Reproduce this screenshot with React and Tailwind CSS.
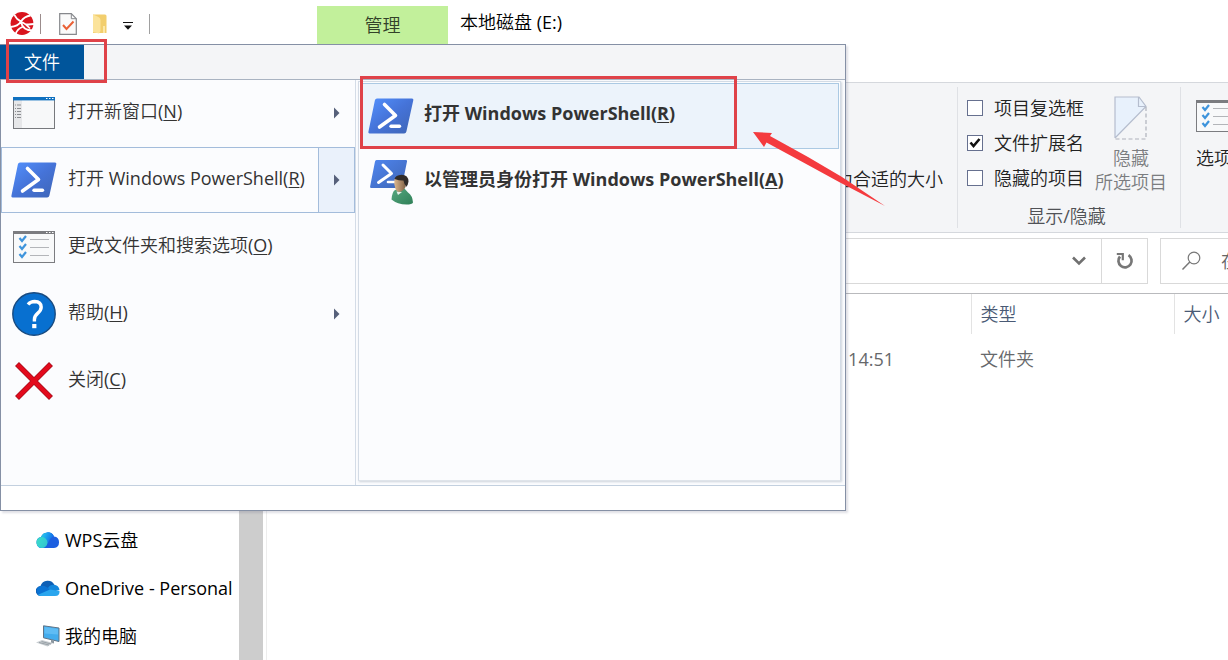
import React from "react";

function Key({ children }) {
  return <span className="underline decoration-1 underline-offset-2">{children}</span>;
}

function PowerShellIcon({ id, className }) {
  return (
    <svg viewBox="0 0 46 36" className={className} aria-hidden="true">
      <defs>
        <linearGradient id={id} x1="0" y1="0" x2="1" y2="1">
          <stop offset="0" stopColor="#5391fe" />
          <stop offset="0.5" stopColor="#4573d8" />
          <stop offset="1" stopColor="#3e65b5" />
        </linearGradient>
      </defs>
      <path d="M9 0.5H44q1.800 0 1.300 1.800L38.400 33.600q-.5 1.900-2.300 1.900H1.600Q0 35.500.4 33.700L6.900 2.300Q7.300.5 9 .5Z" fill={`url(#${id})`} />
      <path d="M16.500 6.500 27.500 17.500 11.500 29" fill="none" stroke="#fff" strokeWidth="3.600" strokeLinecap="round" strokeLinejoin="round" />
      <path d="M23 28.200H31.500" stroke="#fff" strokeWidth="3.400" strokeLinecap="round" />
    </svg>
  );
}

function AdminShellIcon() {
  return (
    <svg viewBox="0 0 46 46" className="h-[46px] w-[46px] shrink-0" aria-hidden="true">
      <defs>
        <linearGradient id="ps-admin" x1="0" y1="0" x2="1" y2="1">
          <stop offset="0" stopColor="#4f86f0" />
          <stop offset="1" stopColor="#3e65b5" />
        </linearGradient>
        <linearGradient id="admin-face" x1="0" y1="0" x2="1" y2="0">
          <stop offset="0" stopColor="#dcb78e" />
          <stop offset="1" stopColor="#7b5c42" />
        </linearGradient>
        <linearGradient id="admin-coat" x1="0" y1="0" x2="1" y2="1">
          <stop offset="0" stopColor="#57a880" />
          <stop offset="1" stopColor="#2f8058" />
        </linearGradient>
      </defs>
      <path d="M8.500 1H38q1.500 0 1 1.500L34 27q-.4 2-2 2H3.300q-1.500 0-1.200-1.500L7 2.500Q7.300 1 8.500 1Z" fill="url(#ps-admin)" />
      <path d="M15 6 23.500 14.500 10.500 23.500" fill="none" stroke="#fff" strokeWidth="3" strokeLinecap="round" strokeLinejoin="round" />
      <path d="M20 23h7" stroke="#fff" strokeWidth="2.600" strokeLinecap="round" />
      <path d="M27 31q-3 2-3.500 9.500 6 5 15 5 5.500 0 6.500-2-.5-7-5-10L36 29Z" fill="url(#admin-coat)" />
      <path d="m28.500 32.500 1.500 3.500 4-3Z" fill="#e4eee7" />
      <path d="M26.500 20q-1 5.500 1 10 1.500 3.500 4 3 4-1 6-5L38.500 19Z" fill="url(#admin-face)" />
      <path d="M26.500 20q1-4 7-4.300 7 .3 7 6.800-.3 3.500-2.500 5.500-.3-2-1.500-3l-1-3.500q-4 .2-9-1.500Z" fill="#302b29" />
    </svg>
  );
}

function WindowIcon() {
  return (
    <svg viewBox="0 0 42 32" className="h-8 w-[42px]" aria-hidden="true">
      <rect x="0.5" y="0.5" width="41" height="31" fill="#f7f8f9" stroke="#77797d" />
      <rect x="1" y="3" width="8" height="28" fill="#e6e7e9" />
      <rect width="42" height="3.400" fill="#0f70c0" />
      <path d="M33 1.500h8" stroke="#fff" strokeWidth="1.200" strokeDasharray="1.500 1.500" />
      <path d="M2 8h6M2 11.500h6M2 14.500h6M2 17.500h6M2 20.500h6" stroke="#8b8d91" strokeWidth="1" strokeDasharray="1 1 4 0" />
    </svg>
  );
}

function OptionsIcon() {
  return (
    <svg viewBox="0 0 42 32" className="h-8 w-[42px] shrink-0" aria-hidden="true">
      <rect x="0.5" y="0.5" width="41" height="31" fill="#f8f9fa" stroke="#7b7c80" />
      <rect width="42" height="3" fill="#7b7c80" />
      <path d="M33 1.500h8" stroke="#fff" strokeWidth="1" strokeDasharray="1.500 1.500" />
      <path d="M17 8.500h19M17 16.500h19M17 24.500h19" stroke="#b3b5b9" strokeWidth="1" />
      <path d="m6.500 7 2.500 3 4-5M6.500 15l2.500 3 4-5M6.500 23l2.500 3 4-5" fill="none" stroke="#3e94dc" strokeWidth="2.200" />
    </svg>
  );
}

function HelpIcon() {
  return (
    <svg viewBox="0 0 44 44" className="h-11 w-11" aria-hidden="true">
      <circle cx="22" cy="22" r="21.200" fill="#0870d0" stroke="#174a80" strokeWidth="1.400" />
      <path d="M16 12.500q2.500-3 6.700-3 6.300.2 6.500 5.600 0 3.300-3.600 6.300-3.200 2.700-3.200 6v2" fill="none" stroke="#fff" strokeWidth="3.400" />
      <rect x="20.200" y="32" width="4.200" height="4.200" fill="#fff" />
    </svg>
  );
}

function CloseIcon() {
  return (
    <svg viewBox="0 0 38 38" className="h-[38px] w-[38px]" aria-hidden="true">
      <path d="M2 2 36 36M36 2 2 36" stroke="#a30d1a" strokeWidth="5.600" />
      <path d="M2.500 2.500 35.500 35.500M35.500 2.500 2.500 35.500" stroke="#e30a1c" strokeWidth="4.200" />
    </svg>
  );
}

function Arrow() {
  return (
    <svg viewBox="0 0 6 12" className="h-3 w-1.5" aria-hidden="true">
      <path d="M0 .5 5.500 6 0 11.500Z" fill="#56607a" />
    </svg>
  );
}

function TitleBar() {
  return (
    <header className="flex h-11 shrink-0 items-end">
      <div className="flex h-11 w-[317px] shrink-0 items-center gap-2 pl-2.5 pt-1">
        <svg viewBox="0 0 24 24" className="h-6 w-6" aria-hidden="true">
          <circle cx="12" cy="11.500" r="11.400" fill="#d9141d" />
          <path d="M4.500 3Q6.500 7.500 11 9.500T20 16.500M20.500 3.500Q14 4.500 11 9.500T.5 15M11 10Q12.500 18.500 23 18.500M14.500 12Q18 13 24 12M5.500 22.500Q7 17 12.500 15" fill="none" stroke="#fff" strokeWidth="1.800" />
        </svg>
        <span className="-ml-0.5 h-5 w-px bg-[#9b8c8c]" />
        <button aria-label="属性" className="ml-2.5 block">
          <svg viewBox="0 0 18 22" className="h-[22px] w-[18px]" aria-hidden="true">
            <path d="M.7.7h11.600l5 5v15.600H.7Z" fill="#fafafa" stroke="#86888c" strokeWidth="1.200" />
            <path d="M12.300.7v5h5" fill="none" stroke="#86888c" />
            <path d="m4 12 3.500 4 7-7.500" fill="none" stroke="#ea6035" strokeWidth="2" />
          </svg>
        </button>
        <button aria-label="新建文件夹" className="ml-2 block">
          <svg viewBox="0 0 14 20" className="h-5 w-3.5" aria-hidden="true">
            <path d="M0 .5h12q1.500 0 1.500 1.500v17H0Z" fill="#f2ce6d" />
            <path d="M0 .5 5.500 3q2 1 2 3v11L6 19.500 0 18Z" fill="#fbe39b" />
            <path d="M11 12v7" stroke="#fff0bb" strokeWidth="1.500" />
          </svg>
        </button>
        <button aria-label="自定义快速访问工具栏" className="ml-2 block pt-1">
          <svg viewBox="0 0 10 8" className="h-2 w-2.5" aria-hidden="true">
            <path d="M0 .5h10" stroke="#111" />
            <path d="M1 3.500h8L5 7.800Z" fill="#111" />
          </svg>
        </button>
        <span className="ml-2 h-5 w-px bg-[#a0a0a0]" />
      </div>
      <button className="h-[38px] w-[131px] shrink-0 bg-[#c2f09b] text-[#334229]">管理</button>
      <h1 className="ml-3 h-11 whitespace-nowrap leading-[44px] text-black">本地磁盘 (E:)</h1>
    </header>
  );
}

function CheckRow({ label, checked }) {
  return (
    <label className="flex h-[35px] items-center gap-[11px] whitespace-nowrap">
      <span className="grid">
        <input
          type="checkbox"
          defaultChecked={checked}
          className="peer col-start-1 row-start-1 h-4 w-4 appearance-none border border-[#66708f] bg-white"
        />
        <svg viewBox="0 0 16 16" className="pointer-events-none col-start-1 row-start-1 hidden h-4 w-4 peer-checked:block" aria-hidden="true">
          <path d="m3.500 7.500 3 3.500 6-7" fill="none" stroke="#111" strokeWidth="2.600" />
        </svg>
      </span>
      {label}
    </label>
  );
}

function Ribbon() {
  return (
    <section className="mt-[38px] flex h-[151px] shrink-0 border-y border-[#d5d8dd] bg-[#f4f5f7] text-[#222]">
      <div className="my-1 flex min-w-0 flex-1 items-end justify-end border-r border-[#dfe1e5] pb-[37px] pr-3.5">
        <span className="whitespace-nowrap leading-6">将所有列调整为合适的大小</span>
      </div>
      <div className="my-1 flex w-[223px] shrink-0 flex-col justify-between border-r border-[#dfe1e5] pl-[9px]">
        <div className="flex gap-[11px] pt-[3px]">
          <div>
            <CheckRow label="项目复选框" />
            <CheckRow label="文件扩展名" checked />
            <CheckRow label="隐藏的项目" />
          </div>
          <button disabled className="flex flex-col items-center whitespace-nowrap pt-1.5 leading-6 text-[#7b7d80]">
            <svg viewBox="0 0 34 44" className="mb-1.5 h-11 w-[34px]" aria-hidden="true">
              <path d="M1 1h24l7 9.500L1 42Z" fill="#e8f1fc" />
              <path d="M1 42V1h24l7 9.500L1 42M24.500 1v9.500H32" fill="none" stroke="#b5bdce" strokeWidth="1.200" />
              <path d="M32 11v32H1" fill="none" stroke="#aeb2bb" strokeWidth="1.200" strokeDasharray="4 2.500" />
            </svg>
            <span>隐藏</span>
            <span>所选项目</span>
          </button>
        </div>
        <span className="pr-3.5 text-center leading-6 text-[#505256]">显示/隐藏</span>
      </div>
      <div className="w-[47px] shrink-0 overflow-hidden pl-[15px] pt-[17px]">
        <button className="flex flex-col items-start gap-3.5 whitespace-nowrap">
          <OptionsIcon />
          <span>选项</span>
        </button>
      </div>
    </section>
  );
}

function AddressBar() {
  return (
    <div className="flex h-[60px] shrink-0 gap-3 pt-[5px]">
      <div className="flex h-[46px] min-w-0 flex-1 border border-[#d9d9d9]">
        <div className="flex flex-1 items-center justify-end pr-[15px]">
          <button aria-label="展开地址">
            <svg viewBox="0 0 14 10" className="h-2.5 w-3.5" aria-hidden="true">
              <path d="m1 1.500 6 6 6-6" fill="none" stroke="#707070" strokeWidth="2.600" />
            </svg>
          </button>
        </div>
        <button aria-label="刷新" className="flex w-[46px] items-center justify-center border-l border-[#d9d9d9]">
          <svg viewBox="0 0 18 18" className="h-[18px] w-[18px]" aria-hidden="true">
            <path d="M12.500 3.200A6.600 6.600 0 1 1 4 4.500" fill="none" stroke="#777" strokeWidth="2.700" />
            <path d="M.8 2H6.800V8.200" fill="none" stroke="#777" strokeWidth="2.200" />
          </svg>
        </button>
      </div>
      <label className="flex h-[46px] w-[68px] shrink-0 items-center gap-5 overflow-hidden border border-r-0 border-[#d9d9d9] pl-5">
        <svg viewBox="0 0 20 20" className="h-5 w-5 shrink-0" aria-hidden="true">
          <circle cx="13" cy="7" r="5.800" fill="none" stroke="#777" strokeWidth="1.200" />
          <path d="M8.800 11 1.500 18.500" stroke="#777" strokeWidth="1.500" />
        </svg>
        <input type="search" aria-label="搜索" placeholder="在" className="w-16 shrink-0 bg-transparent outline-none placeholder:text-[#666]" />
      </label>
    </div>
  );
}

function CloudIcon({ kind }) {
  if (kind === "wps") {
    return (
      <svg viewBox="0 0 24 18" className="h-[18px] w-6" aria-hidden="true">
        <defs>
          <linearGradient id="wps-cloud" x1="0" y1="0" x2="1" y2="0.4">
            <stop offset="0" stopColor="#3be2bb" />
            <stop offset="0.45" stopColor="#20b5ee" />
            <stop offset="1" stopColor="#1160e8" />
          </linearGradient>
        </defs>
        <path d="M6 17a5.500 5.500 0 0 1-1-10.900A7 7 0 0 1 18 5.500 5.800 5.800 0 0 1 18 17Z" fill="#1c5fe0" />
        <path d="M6 17a5.500 5.500 0 0 1-1-10.900A7 7 0 0 1 18 5.500Q14.500 6 13 10T8 17Z" fill="url(#wps-cloud)" />
        <circle cx="6" cy="11.500" r="5.400" fill="#3fdcc4" opacity="0.75" />
      </svg>
    );
  }
  return (
    <svg viewBox="0 0 24 16" className="h-4 w-6" aria-hidden="true">
      <path d="M5 16A5 5 0 0 1 4.500 6 7.500 7.500 0 0 1 18.500 5Z" fill="#0e5fb5" />
      <path d="M4.500 6q3-1 6 1l6 3.500L4 15.500A5 5 0 0 1 4.500 6Z" fill="#0b73d4" />
      <path d="M12 8q2-3.500 6-3.200A5.600 5.600 0 0 1 23.500 10L16 12Z" fill="#1487dc" />
      <path d="M2 14.800 14 9.500l9.500 1.500q.5 5-4.500 5H5q-2 0-3-1.200Z" fill="#2aa6ee" />
    </svg>
  );
}

function ComputerIcon() {
  return (
    <svg viewBox="0 0 24 22" className="h-[22px] w-6" aria-hidden="true">
      <path d="M7.500.8 23 3v13.500L7.500 12.800Z" fill="#43aced" stroke="#617486" />
      <path d="M8.500 2 22 4v5.500L8.500 8.500Z" fill="#5fbcf4" />
      <path d="m15 14.800 3 .8v3l-3-.8Z" fill="#8d979f" />
      <path d="m0 17.500 6-2.500 11 3L11.500 21.500Z" fill="#c9ced2" />
      <path d="m3 17.500 10 2.500M5.500 16.500l9.500 2.500" stroke="#8c959c" strokeWidth=".8" />
    </svg>
  );
}

function Explorer() {
  const places = [
    { name: "WPS云盘", icon: <CloudIcon kind="wps" /> },
    { name: "OneDrive - Personal", icon: <CloudIcon kind="onedrive" /> },
    { name: "我的电脑", icon: <ComputerIcon /> },
  ];
  return (
    <div className="flex min-h-[367px] flex-1 border-t border-[#b9babd]">
      <nav className="w-[239px] shrink-0 overflow-hidden pl-9 pt-[222px] text-black">
        {places.map((p) => (
          <a key={p.name} href="#" className="flex h-12 items-center gap-[5px] whitespace-nowrap">
            {p.icon}
            {p.name}
          </a>
        ))}
      </nav>
      <div className="w-6 shrink-0 bg-[#cdcdcd]" />
      <div className="ml-[3px] min-w-0 flex-1 border-l border-[#ededed]">
        <table className="w-full table-fixed text-left text-[#66686b]">
          <colgroup>
            <col />
            <col className="w-[203px]" />
            <col className="w-[54px]" />
          </colgroup>
          <thead>
            <tr className="h-10 text-[#4a5a75]">
              <th className="border-r border-[#e3e3e3] font-normal" aria-label="修改日期" />
              <th className="border-r border-[#e3e3e3] pl-[9px] font-normal">类型</th>
              <th className="whitespace-nowrap pl-[9px] font-normal">大小</th>
            </tr>
          </thead>
          <tbody>
            <tr className="h-[50px]">
              <td className="pr-[77px] text-right">14:51</td>
              <td className="pl-[9px]">文件夹</td>
              <td />
            </tr>
          </tbody>
        </table>
      </div>
    </div>
  );
}

function MenuItem({ icon, children, arrow, active }) {
  return (
    <button
      className={
        active
          ? "flex h-[66px] w-full items-center border border-[#a3bcdb] text-left"
          : "flex h-[66px] w-full items-center border border-transparent text-left"
      }
    >
      <span className="ml-2 flex w-12 shrink-0 items-center justify-center">{icon}</span>
      <span className="ml-2.5 flex-1 whitespace-nowrap pb-1">{children}</span>
      {arrow && (
        <span
          className={
            active
              ? "flex h-full w-9 shrink-0 items-center justify-center border-l border-[#a3bcdb] bg-[#eaf1fb]"
              : "flex h-full w-9 shrink-0 items-center justify-center border-l border-transparent"
          }
        >
          <Arrow />
        </span>
      )}
    </button>
  );
}

function FileMenu() {
  return (
    <div className="absolute left-0 top-11 w-[846px] border border-[#8590a5] bg-white text-[#333] shadow-[2px_2px_2px_rgba(80,80,110,0.18)]">
      <div className="flex h-[35px] border-b border-[#a9b3c1] bg-[#f4f5f7]">
        <button className="-ml-px w-[84px] bg-[#00559b] text-white">文件</button>
      </div>
      <div className="flex h-[406px] border-b border-[#c3d0df] bg-[#fbfcfe]">
        <div className="flex w-[355px] shrink-0 flex-col gap-px border-r border-[#d4dce7]">
          <MenuItem icon={<WindowIcon />} arrow>打开新窗口(<Key>N</Key>)</MenuItem>
          <MenuItem icon={<PowerShellIcon id="ps-left" className="h-9 w-[46px]" />} arrow active>
            打开 Windows PowerShell(<Key>R</Key>)
          </MenuItem>
          <MenuItem icon={<OptionsIcon />}>更改文件夹和搜索选项(<Key>O</Key>)</MenuItem>
          <MenuItem icon={<HelpIcon />} arrow>帮助(<Key>H</Key>)</MenuItem>
          <MenuItem icon={<CloseIcon />}>关闭(<Key>C</Key>)</MenuItem>
        </div>
        <div className="mb-1 ml-0.5 mr-1 mt-px flex-1 border border-[#d3dbe5] border-b-[#dfe4ea] p-px font-['Open_Sans','Noto_Sans_CJK_SC',sans-serif] font-bold shadow-[1px_1px_2px_rgba(100,120,140,0.3)]">
          <button className="flex h-[66px] w-full items-center border border-[#abc9e3] bg-[#ecf3fb] pl-[7px] text-left">
            <PowerShellIcon id="ps-sub" className="h-9 w-[46px] shrink-0" />
            <span className="ml-2.5 whitespace-nowrap pb-1.5">打开 Windows PowerShell(<Key>R</Key>)</span>
          </button>
          <button className="flex h-[66px] w-full items-center border border-transparent pl-[7px] text-left">
            <AdminShellIcon />
            <span className="ml-2.5 whitespace-nowrap pb-1.5">以管理员身份打开 Windows PowerShell(<Key>A</Key>)</span>
          </button>
        </div>
      </div>
      <div className="h-6" />
    </div>
  );
}

function Annotations() {
  return (
    <>
      <div className="pointer-events-none absolute left-[6px] top-[39px] h-11 w-[101px] border-[3px] border-[#df4249]" />
      <div className="pointer-events-none absolute left-[360px] top-[76px] h-[73px] w-[377px] border-[3px] border-[#df4249]" />
      <svg viewBox="0 0 134 78" className="pointer-events-none absolute left-[752px] top-[130px] h-[78px] w-[134px]" aria-hidden="true">
        <path d="M1 2 20 3 18 6 56 27 90 47 133 76 88 52.500 56 35 14.500 12.500 12 17Z" fill="#f43a3e" />
      </svg>
    </>
  );
}

export default function App() {
  return (
    <div className="relative flex min-h-screen flex-col overflow-hidden bg-white font-['Open_Sans','Noto_Sans_CJK_SC_DemiLight','Noto_Sans_CJK_SC',sans-serif] text-[18px] leading-6">
      <TitleBar />
      <Ribbon />
      <AddressBar />
      <Explorer />
      <FileMenu />
      <Annotations />
    </div>
  );
}
